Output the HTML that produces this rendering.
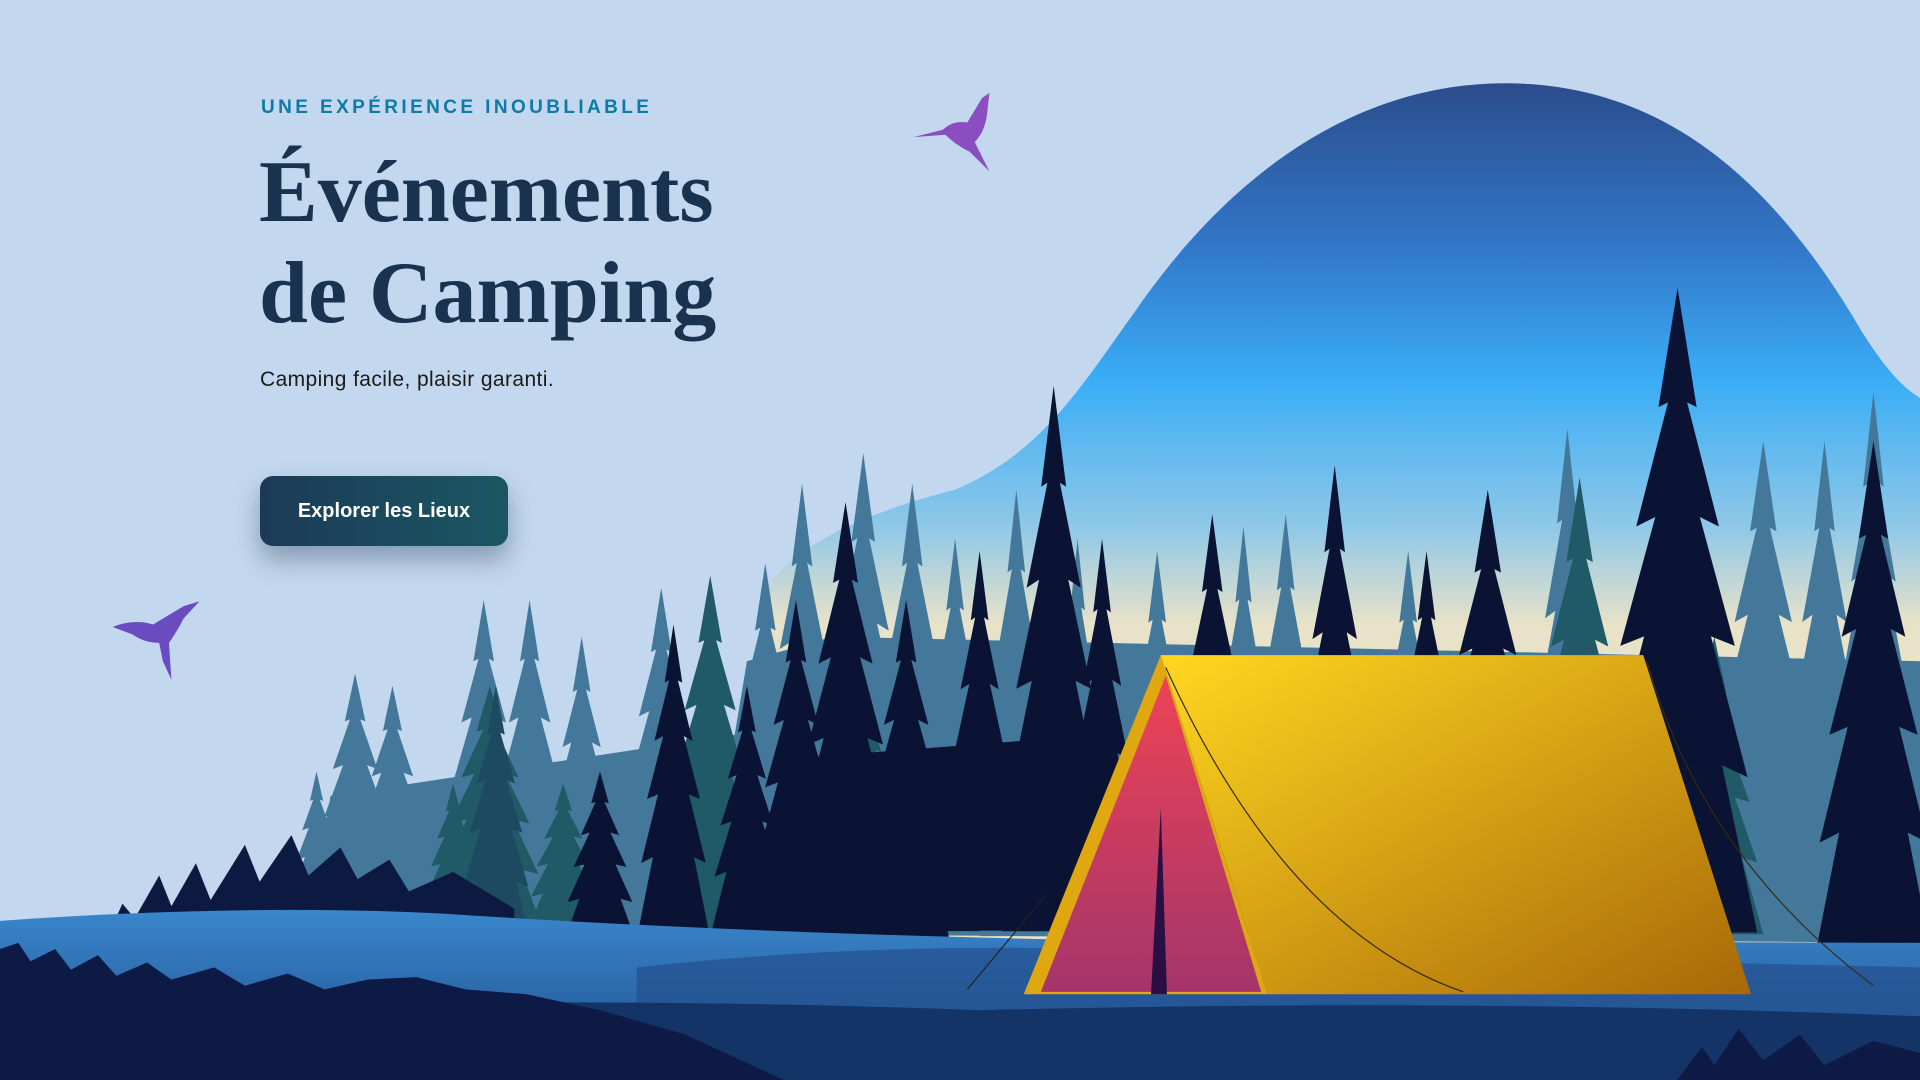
<!DOCTYPE html>
<html><head><meta charset="utf-8"><style>
html,body{margin:0;padding:0}
body{width:1920px;height:1080px;overflow:hidden;background:#c3d8ee;position:relative;font-family:"Liberation Sans",sans-serif}
svg.scene{position:absolute;left:0;top:0;width:1920px;height:1080px}
.eyebrow{position:absolute;left:261px;top:97px;font-size:19px;font-weight:bold;letter-spacing:3.4px;color:#0e7aa6}
h1{position:absolute;left:259px;top:142px;margin:0;font-family:"Liberation Serif",serif;font-weight:bold;font-size:88px;line-height:101px;color:#18324f}
.sub{position:absolute;left:260px;top:368px;font-size:21px;letter-spacing:.4px;color:#1a1a1a}
.btn{position:absolute;left:260px;top:476px;width:248px;height:70px;border-radius:13px;background:linear-gradient(90deg,#1c3a57,#1a5763);color:#fff;font-size:20px;font-weight:bold;display:flex;align-items:center;justify-content:center;box-shadow:0 14px 26px rgba(20,40,70,.35)}
</style></head><body>
<svg class="scene" viewBox="0 0 1568 882" preserveAspectRatio="none">
<defs>
<linearGradient id="sky" gradientUnits="userSpaceOnUse" x1="0" y1="68" x2="0" y2="510">
<stop offset="0" stop-color="#2b4c8c"/><stop offset=".3" stop-color="#3277c8"/><stop offset=".55" stop-color="#3aadf6"/><stop offset=".82" stop-color="#8fc8e8"/><stop offset="1" stop-color="#e8e2c8"/></linearGradient>
<linearGradient id="tent" x1="0" y1="0" x2="1" y2="1"><stop offset="0" stop-color="#ffd820"/><stop offset="1" stop-color="#a86808"/></linearGradient>
<linearGradient id="front" x1="0" y1="0" x2="0" y2="1"><stop offset="0" stop-color="#ee4355"/><stop offset="1" stop-color="#a4356a"/></linearGradient>
<linearGradient id="hill" x1="0" y1="0" x2="0" y2="1"><stop offset="0" stop-color="#3a86cc"/><stop offset="1" stop-color="#1d4c8a"/></linearGradient>
<path id="tr" d="M50 0 L62 50 L56 48 L76 100 L64 96 L86 150 L71 146 L94 205 L78 200 L100 270 L0 270 L22 200 L6 205 L29 146 L14 150 L36 96 L24 100 L44 48 L38 50 Z"/>
</defs>
<path d="M620 490 C640 450 700 420 780 400 C850 370 880 320 930 250 C1000 150 1100 68 1230 68 C1360 68 1450 150 1520 270 C1545 310 1560 320 1568 325 L1568 770 L620 770 Z" fill="url(#sky)"/>
<polygon points="250,760 270,650 600,600 610,540 680,520 1568,540 1568,770" fill="#44789a"/>
<g fill="#44789a">
<use href="#tr" transform="translate(255,550) scale(.7,.78)"/>
<use href="#tr" transform="translate(288,560) scale(.65,.74)"/>
<use href="#tr" transform="translate(360,490) scale(.7,1)"/>
<use href="#tr" transform="translate(400,490) scale(.65,1)"/>
<use href="#tr" transform="translate(445,520) scale(.6,.9)"/>
<use href="#tr" transform="translate(505,480) scale(.7,1.05)"/>
<use href="#tr" transform="translate(590,460) scale(.7,1.1)"/>
<use href="#tr" transform="translate(620,395) scale(.7,1.35)"/>
<use href="#tr" transform="translate(665,370) scale(.8,1.45)"/>
<use href="#tr" transform="translate(710,395) scale(.7,1.35)"/>
<use href="#tr" transform="translate(750,440) scale(.6,1.17)"/>
<use href="#tr" transform="translate(800,400) scale(.6,1.35)"/>
<use href="#tr" transform="translate(855,440) scale(.5,1.17)"/>
<use href="#tr" transform="translate(915,450) scale(.6,1.17)"/>
<use href="#tr" transform="translate(988,430) scale(.55,1.24)"/>
<use href="#tr" transform="translate(1020,420) scale(.6,1.24)"/>
<use href="#tr" transform="translate(1120,450) scale(.6,1.17)"/>
<use href="#tr" transform="translate(1245,350) scale(.7,1.55)"/>
<use href="#tr" transform="translate(1395,360) scale(.9,1.48)"/>
<use href="#tr" transform="translate(1455,360) scale(.7,1.48)"/>
<use href="#tr" transform="translate(1495,320) scale(.7,1.55)"/>
<use href="#tr" transform="translate(236,630) scale(.45,.48)"/>
</g>
<g fill="#1f5a66">
<use href="#tr" transform="translate(355,560) scale(.9,.75)"/>
<use href="#tr" transform="translate(540,470) scale(.8,1.1)"/>
<use href="#tr" transform="translate(430,640) scale(.6,.45)"/>
<use href="#tr" transform="translate(345,640) scale(.5,.45)"/>
<use href="#tr" transform="translate(1360,520) scale(.8,.9)"/>
<use href="#tr" transform="translate(670,580) scale(.8,.68)"/>
<use href="#tr" transform="translate(1245,390) scale(.9,1.38)"/>
<use href="#tr" transform="translate(375,560) scale(.6,.8)" fill="#1d4a60"/>
</g>
<polygon points="610,760 640,620 900,600 920,760" fill="#0a1333"/>
<g fill="#0a1333">
<use href="#tr" transform="translate(818,315) scale(.85,1.65)"/>
<use href="#tr" transform="translate(648,410) scale(.85,1.32)"/>
<use href="#tr" transform="translate(615,490) scale(.7,1.02)"/>
<use href="#tr" transform="translate(705,490) scale(.7,1.02)"/>
<use href="#tr" transform="translate(770,450) scale(.6,1.13)"/>
<use href="#tr" transform="translate(870,440) scale(.6,1.2)"/>
<use href="#tr" transform="translate(955,420) scale(.7,1.27)"/>
<use href="#tr" transform="translate(1055,380) scale(.7,1.42)"/>
<use href="#tr" transform="translate(1135,450) scale(.6,1.13)"/>
<use href="#tr" transform="translate(1170,400) scale(.9,1.35)"/>
<use href="#tr" transform="translate(1305,235) scale(1.3,1.95)"/>
<use href="#tr" transform="translate(1480,360) scale(1,1.6)"/>
<use href="#tr" transform="translate(460,630) scale(.6,.52)"/>
<use href="#tr" transform="translate(520,510) scale(.6,.95)"/>
<use href="#tr" transform="translate(580,560) scale(.6,.76)"/>
<use href="#tr" transform="translate(750,620) scale(.5,.52)"/>
</g>
<path d="M90 760 L100 738 L110 750 L130 715 L140 740 L160 705 L172 735 L200 690 L212 720 L238 682 L252 715 L278 692 L292 718 L318 702 L334 728 L370 712 L420 742 L420 770 L90 770 Z" fill="#0c1a42"/>
<path d="M0 752 Q200 738 360 746 Q600 762 900 768 L1568 770 L1568 882 L0 882 Z" fill="url(#hill)"/>
<path d="M520 790 Q700 770 900 775 L1568 790 L1568 882 L520 882 Z" fill="#24508e" opacity=".7"/>
<path d="M0 830 Q400 810 800 825 Q1200 815 1568 830 L1568 882 L0 882 Z" fill="#143366"/>
<path d="M0 775 L15 770 L25 785 L45 775 L58 792 L80 780 L95 797 L120 786 L140 800 L175 790 L200 805 L235 795 L265 808 L300 800 L340 798 L380 808 L430 812 L490 825 L560 845 L640 882 L0 882 Z" fill="#0c1a45"/>
<path d="M1370 882 L1390 855 L1400 870 L1420 840 L1440 866 L1470 845 L1490 870 L1530 850 L1568 860 L1568 882 Z" fill="#0c1a45"/>
<polygon points="948,535 1342,535 1430,812 1035,812" fill="url(#tent)"/>
<polygon points="948,535 836,812 1035,812" fill="#e0a810"/>
<polygon points="952,552 850,810 1030,810" fill="url(#front)"/>
<polygon points="948,660 940,812 953,812" fill="#2a0f45"/>
<path d="M952 545 Q1050 760 1195 810" stroke="#3a2a10" stroke-width="1" fill="none"/>
<path d="M1345 540 Q1390 700 1530 805" stroke="#3a2a10" stroke-width="1" fill="none"/>
<path d="M855 730 L790 808" stroke="#222" stroke-width="1"/>
<g fill="#8a4ec0">
<path d="M746 112 L770 106 Q778 98 790 100 L802 80 L808 76 L806 94 Q804 108 796 116 L808 140 L798 130 L792 124 Q780 118 772 110 Z"/>
</g>
<g fill="#6a4cc0">
<path d="M92 512 Q110 505 125 510 L150 495 L163 491 L150 505 Q145 515 138 525 L140 555 L133 540 L130 525 Q118 525 108 518 Z"/>
</g>
</svg>
<div class="eyebrow">UNE EXPÉRIENCE INOUBLIABLE</div>
<h1>Événements<br>de Camping</h1>
<div class="sub">Camping facile, plaisir garanti.</div>
<div class="btn">Explorer les Lieux</div>
</body></html>
